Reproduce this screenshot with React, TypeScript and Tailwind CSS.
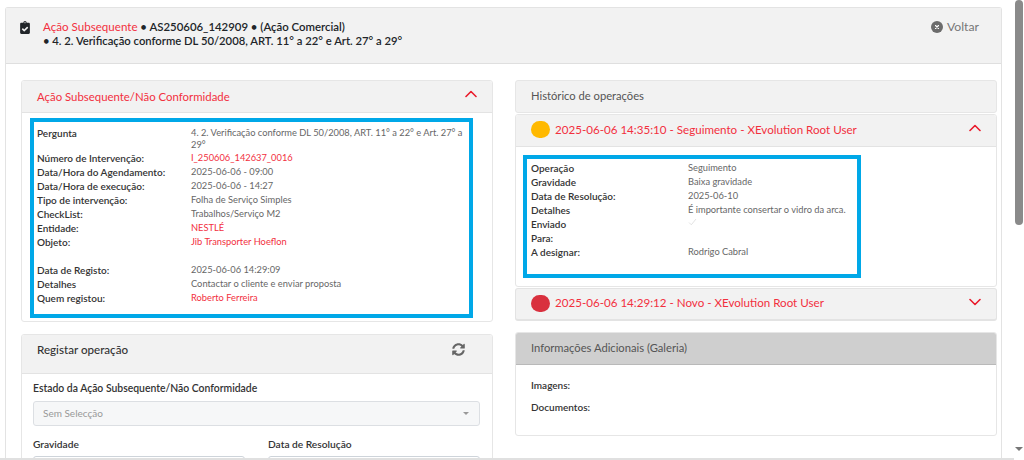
import React from "react";

const F = "font-['Lato',sans-serif]";

function Row({ label, value, red, mt }: { label: string; value?: React.ReactNode; red?: boolean; mt?: string }) {
  return (
    <div className={`flex ${mt ?? ""}`}>
      <div className="w-[154px] shrink-0 text-[10px] leading-[14px] font-semibold text-[#333]">{label}</div>
      <div className={`flex-1 text-[9.3px] leading-[12px] pt-[1px] min-h-[14px] ${red ? "text-[#f2303e]" : "text-[#666]"}`}>{value}</div>
    </div>
  );
}

function ChevUp({ down }: { down?: boolean }) {
  return (
    <svg className="mb-[5px]" width="12" height="8" viewBox="0 0 12 8" fill="none" stroke="#ea1c2c" strokeWidth="1.6" strokeLinecap="round" strokeLinejoin="round">
      {down ? <path d="M1 1.5 L6 6.5 L11 1.5" /> : <path d="M1 6.5 L6 1.5 L11 6.5" />}
    </svg>
  );
}

function Field({ label, className }: { label: string; className?: string }) {
  return (
    <div className={className}>
      <div className="text-[10.2px] leading-[14px] font-semibold text-[#333]">{label}</div>
      <div className="mt-[5px] h-[25px] rounded-[3px] border border-[#ced4da] bg-white" />
    </div>
  );
}

export default function App() {
  return (
    <div className={`${F} flex h-[460px] w-[1024px] overflow-hidden bg-white`}>
      <main className="flex-1 min-w-0 flex flex-col">
        <div className="flex-1 min-h-0 overflow-hidden pl-[5px] pr-[12px] pt-[7px]">
          <div className="h-full border-x border-t border-[#e3e3e3] rounded-t-[3px] bg-white flex flex-col">
            <header className="h-[56px] shrink-0 bg-[#f2f2f2] border-b border-[#dfdfdf] flex pt-[12px] pl-[14px] pr-[22px]">
              <svg className="mt-[1px] shrink-0" width="10" height="13" viewBox="0 0 384 512" fill="#212529">
                <path d="M336 64h-80c0-35.300-28.700-64-64-64s-64 28.700-64 64H48C21.500 64 0 85.500 0 112v352c0 26.500 21.500 48 48 48h288c26.500 0 48-21.500 48-48V112c0-26.500-21.500-48-48-48zM192 40c13.300 0 24 10.700 24 24s-10.700 24-24 24-24-10.700-24-24 10.700-24 24-24zm121.200 231.800l-143 141.800c-4.700 4.700-12.300 4.600-17-.1l-82.600-83.300c-4.700-4.700-4.600-12.300.1-17L99.100 285c4.700-4.700 12.300-4.600 17 .1l46 46.400 106-105.200c4.700-4.700 12.300-4.600 17 .1l28.200 28.400c4.700 4.800 4.600 12.300-.1 17z" />
              </svg>
              <div className="ml-[13px] flex-1 text-[11.4px] leading-[14px] font-semibold text-[#212529]">
                <div><span className="font-normal text-[11.6px] text-[#f2303e]">Ação Subsequente</span> • AS250606_142909 • (Ação Comercial)</div>
                <div className="text-[11.25px]">• 4. 2. Verificação conforme DL 50/2008, ART. 11° a 22° e Art. 27° a 29°</div>
              </div>
              <div className="flex items-start gap-[4px] text-[#777] text-[12.2px] leading-[14px]">
                <svg className="mt-[1px]" width="12" height="12" viewBox="0 0 12 12">
                  <circle cx="6" cy="6" r="6" fill="#6c6c6c" />
                  <path d="M4.500 4.500 L7.500 7.500 M7.500 4.500 L4.500 7.500" stroke="#fff" strokeWidth="1.100" strokeLinecap="round" />
                </svg>
                Voltar
              </div>
            </header>

            <div className="flex-1 min-h-0 flex gap-[22px] pl-[15px] pr-[4px] pt-[16px]">
              <div className="w-[472px] shrink-0 flex flex-col gap-[12px]">
                <section className="h-[242px] shrink-0 border border-[#e6e6e6] rounded-[3px] overflow-hidden">
                  <div className="h-[32px] bg-[#f2f2f2] border-b border-[#e3e3e3] flex items-center justify-between pl-[15px] pr-[15px]">
                    <span className="text-[11.4px] text-[#f2303e]">Ação Subsequente/Não Conformidade</span>
                    <ChevUp />
                  </div>
                  <div className="mt-[5px] ml-[8px] w-[443px] h-[200px] border-[4px] border-[#00a8e8] pl-[3px] pr-[2px] pt-[4px] box-border">
                    <Row label="Pergunta" value="4. 2. Verificação conforme DL 50/2008, ART. 11° a 22° e Art. 27° a 29°" />
                    <Row label="Número de Intervenção:" value="I_250606_142637_0016" red />
                    <Row label="Data/Hora do Agendamento:" value="2025-06-06 - 09:00" />
                    <Row label="Data/Hora de execução:" value="2025-06-06 - 14:27" />
                    <Row label="Tipo de intervenção:" value="Folha de Serviço Simples" />
                    <Row label="CheckList:" value="Trabalhos/Serviço M2" />
                    <Row label="Entidade:" value="NESTLÉ" red />
                    <Row label="Objeto:" value="Jib Transporter Hoeflon" red />
                    <Row label="Data de Registo:" value="2025-06-06 14:29:09" mt="mt-[14px]" />
                    <Row label="Detalhes" value="Contactar o cliente e enviar proposta" />
                    <Row label="Quem registou:" value="Roberto Ferreira" red />
                  </div>
                </section>

                <section className="h-[200px] shrink-0 border border-[#e6e6e6] rounded-[3px] overflow-hidden">
                  <div className="h-[39px] bg-[#f2f2f2] border-b border-[#e3e3e3] flex items-center justify-between pb-[8px] pl-[15px] pr-[27px]">
                    <span className="text-[11.6px] font-medium text-[#333]">Registar operação</span>
                    <svg className="mb-[2px]" width="13" height="13" viewBox="0 0 512 512" fill="#666">
                      <path d="M370.700 133.300C339.500 104 298.900 88 255.800 88c-77.500.1-144.300 53.200-162.800 126.900-1.300 5.400-6.100 9.100-11.700 9.100H24.100c-7.500 0-13.200-6.800-11.800-14.200C33.900 94.900 134.800 8 256 8c66.400 0 126.800 26.100 171.300 68.700L463 41c15.100-15.100 41-4.400 41 17v134c0 13.300-10.700 24-24 24H346c-21.400 0-32.100-25.900-17-41l41.700-41.700zM32 296h134c21.400 0 32.100 25.900 17 41l-41.700 41.700c31.200 29.300 71.800 45.300 114.900 45.300 77.400-.1 144.300-53.100 162.800-126.800 1.300-5.400 6.100-9.100 11.700-9.100h57.300c7.500 0 13.200 6.800 11.800 14.200C478.100 417.100 377.200 504 256 504c-66.400 0-126.800-26.100-171.300-68.700L49 471c-15.100 15.100-41 4.400-41-17V320c0-13.300 10.700-24 24-24z" />
                    </svg>
                  </div>
                  <div className="pl-[11px] pr-[12px] pt-[7px]">
                    <div className="text-[10.4px] leading-[14px] font-semibold text-[#333]">Estado da Ação Subsequente/Não Conformidade</div>
                    <div className="mt-[6px] h-[25px] rounded-[3px] border border-[#dcdfe3] bg-[#f6f7f8] flex items-center justify-between pl-[9px] pr-[10px]">
                      <span className="text-[10px] text-[#999]">Sem Selecção</span>
                      <span className="w-0 h-0 border-x-[3px] border-x-transparent border-t-[3px] border-t-[#999]" />
                    </div>
                    <div className="mt-[11px] flex gap-[23px]">
                      <Field label="Gravidade" className="w-[212px]" />
                      <Field label="Data de Resolução" className="flex-1" />
                    </div>
                  </div>
                </section>
              </div>

              <div className="flex-1 min-w-0 flex flex-col">
                <div className="h-[33px] shrink-0 bg-[#f2f2f2] border border-[#e6e6e6] rounded-[3px] flex items-center pl-[15px] text-[11.2px] text-[#555]">
                  Histórico de operações
                </div>
                <section className="mt-[1px] h-[173px] shrink-0 border border-[#e6e6e6] rounded-[3px] overflow-hidden">
                  <div className="h-[32px] bg-[#f2f2f2] border-b border-[#e3e3e3] flex items-center pl-[15px] pr-[15px]">
                    <span className="w-[19px] h-[17px] mb-[2px] rounded-full bg-[#ffb900] shrink-0" />
                    <span className="ml-[5px] mb-[2px] flex-1 text-[11.6px] text-[#f2303e]">2025-06-06 14:35:10 - Seguimento - XEvolution Root User</span>
                    <ChevUp />
                  </div>
                  <div className="mt-[8px] ml-[7px] w-[338px] h-[123px] border-[4px] border-[#00a8e8] pl-[4px] pt-[2px] box-border">
                    <div className="[&>div>div:first-child]:w-[157px]">
                      <Row label="Operação" value="Seguimento" />
                      <Row label="Gravidade" value="Baixa gravidade" />
                      <Row label="Data de Resolução:" value="2025-06-10" />
                      <Row label="Detalhes" value="É importante consertar o vidro da arca." />
                      <Row label="Enviado" value={
                        <svg width="9" height="8" viewBox="0 0 9 8" fill="none" stroke="#e2e2e2" strokeWidth="1"><path d="M1 4.500 L3.300 6.800 L8 1" /></svg>
                      } />
                      <Row label="Para:" />
                      <Row label="A designar:" value="Rodrigo Cabral" />
                    </div>
                  </div>
                </section>
                <section className="mt-[1px] h-[33px] shrink-0 bg-[#f2f2f2] border border-[#e3e3e3] border-b-2 rounded-[3px] flex items-center pl-[15px] pr-[15px]">
                  <span className="w-[19px] h-[17px] mb-[2px] rounded-full bg-[#d9303e] shrink-0" />
                  <span className="ml-[5px] mb-[2px] flex-1 text-[11.6px] text-[#f2303e]">2025-06-06 14:29:12 - Novo - XEvolution Root User</span>
                  <ChevUp down />
                </section>
                <section className="mt-[11px] h-[104px] shrink-0 border border-[#e6e6e6] rounded-[3px] overflow-hidden">
                  <div className="h-[32px] bg-[#cfcfcf] border-b border-[#b9b9b9] flex items-center pl-[15px] text-[11.2px] text-[#555]">
                    Informações Adicionais (Galeria)
                  </div>
                  <div className="pl-[15px] pt-[13px] text-[10px] leading-[14px] font-semibold text-[#333]">
                    <div>Imagens:</div>
                    <div className="mt-[8px]">Documentos:</div>
                  </div>
                </section>
              </div>
            </div>
          </div>
        </div>
        <div className="h-[2px] shrink-0 bg-[#e0e0e0]" />
      </main>
      <aside className="w-[10px] shrink-0 bg-white flex flex-col items-start">
        <div className="w-[8px] ml-[1px] h-[225px] rounded-[4px] bg-[#8a8a8a]" />
        <div className="mt-auto mb-[9px] ml-[1px] w-0 h-0 border-x-[4px] border-x-transparent border-t-[4px] border-t-[#777]" />
      </aside>
    </div>
  );
}
